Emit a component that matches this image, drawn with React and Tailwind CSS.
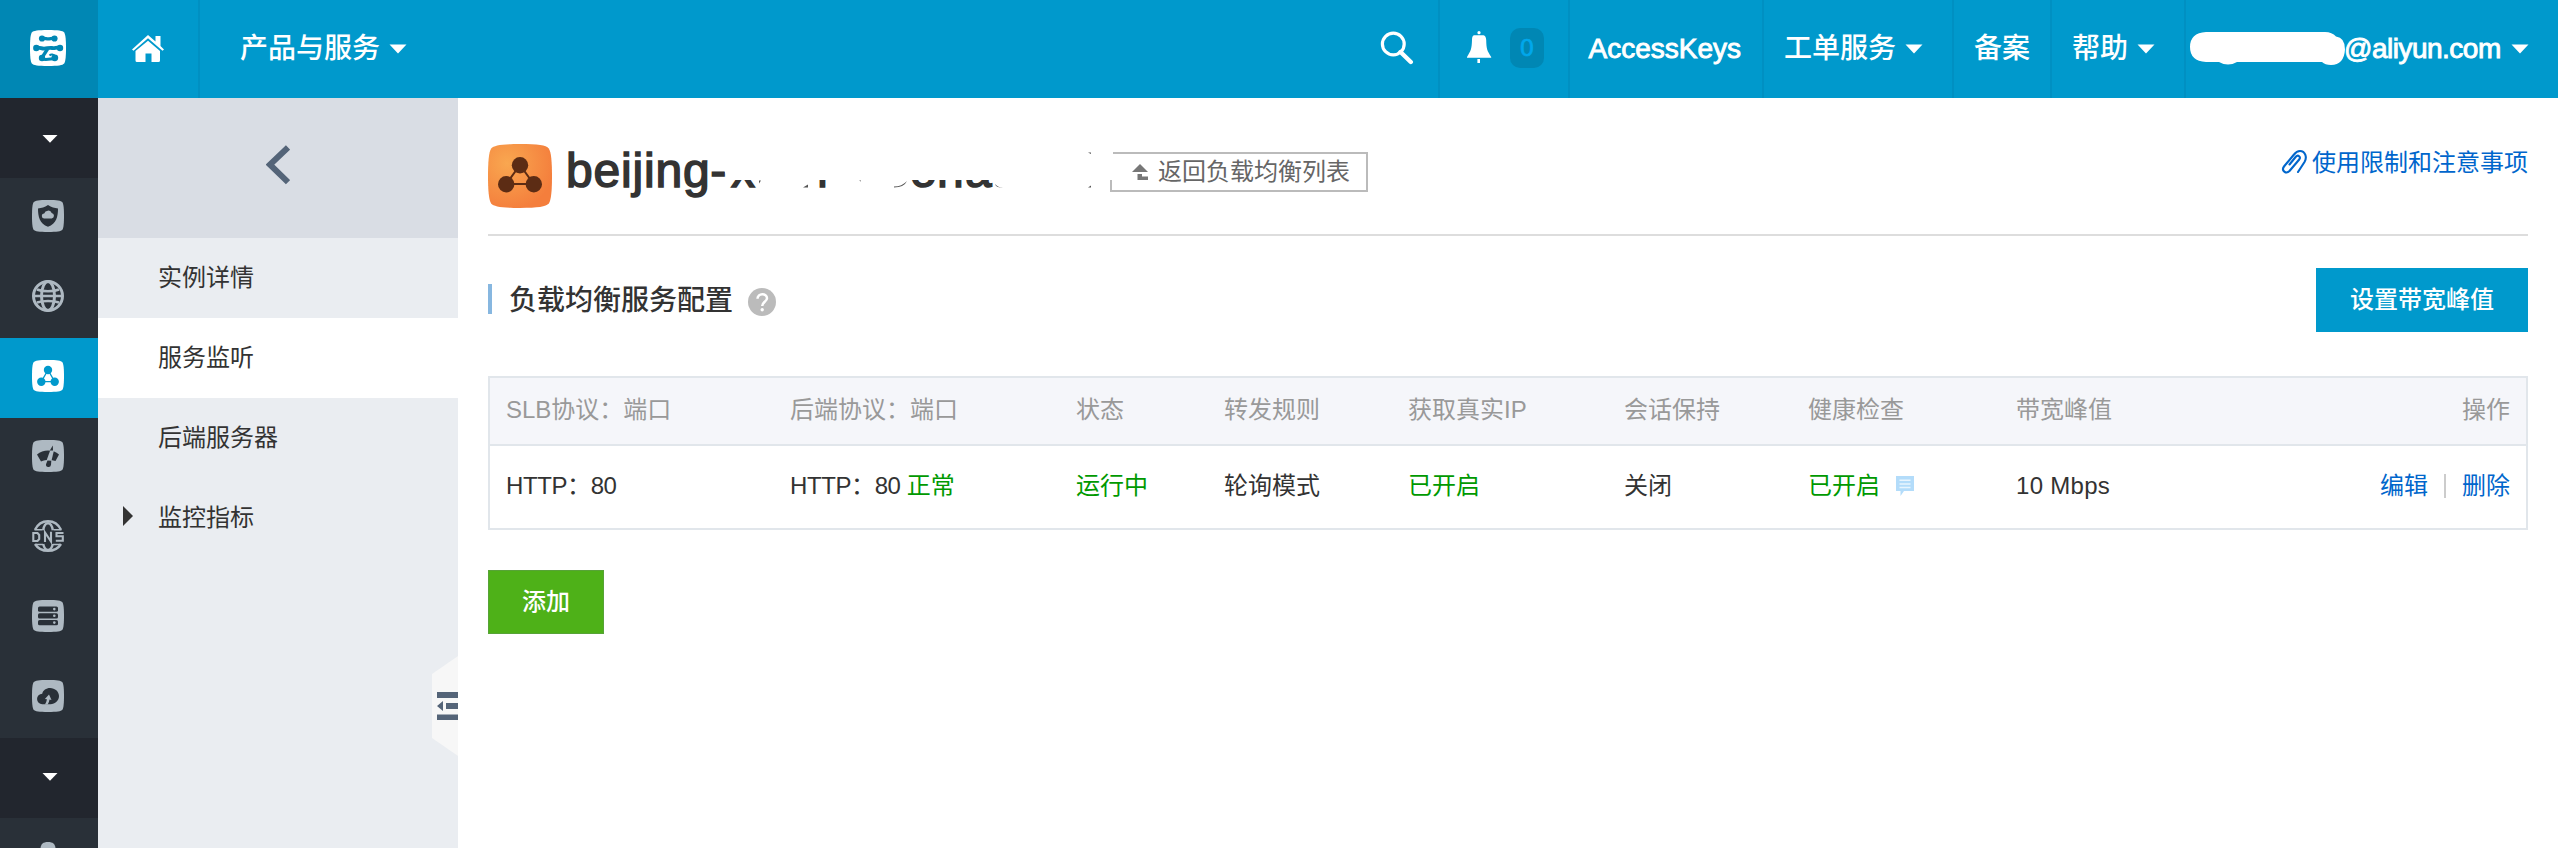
import React from "react";

const Squircle = ({ fill }) => (
  <path fill={fill} d="M16 0C25 0 29 .6 30.4 2.2 31.6 4 32 9 32 16s-.4 12-1.6 13.800C29 31.400 25 32 16 32S3 31.400 1.600 29.800C.4 28 0 23 0 16S.4 4 1.600 2.200C3 .6 7 0 16 0Z" />
);

const Caret = ({ className = "" }) => (
  <svg viewBox="0 0 18 10" className={`h-[10px] w-[18px] shrink-0 ${className}`}>
    <path d="M.5.5h17L9 9.500Z" fill="#fff" />
  </svg>
);

const LIGHT = "#aeb9c2";
const DARK = "#293038";

const LogoIcon = () => (
  <svg viewBox="0 0 36 36" className="h-9 w-9">
    <g transform="scale(1.125)"><Squircle fill="#fff" /></g>
    <g fill="#0087b4" stroke="#0087b4">
      <circle cx="12" cy="8.500" r="3.100" stroke="none" />
      <circle cx="24.500" cy="8.500" r="3.100" stroke="none" />
      <path d="M12 8.500c2.500-.6 4 .4 6.200.4s3.700-1 6.300-.4" fill="none" strokeWidth="3.400" />
      <circle cx="6.300" cy="18" r="3.200" stroke="none" />
      <circle cx="30" cy="18" r="3.200" stroke="none" />
      <path d="M6 18c3.500-1 5 .6 8 .6s5-1 8-.6 5-1 8 0" fill="none" strokeWidth="3.800" />
      <path d="M17.500 19 12.500 26.800" fill="none" strokeWidth="3.400" />
      <circle cx="12" cy="28" r="3.200" stroke="none" />
      <path d="M12 29c4 1.200 9-.2 12.500-.2" fill="none" strokeWidth="3" />
      <circle cx="24.800" cy="27.800" r="3.400" stroke="none" />
      <path d="M19.500 25.500c1.500-1.500 4-1.500 6 1" fill="none" strokeWidth="2" />
    </g>
  </svg>
);

const RailSvg = ({ children }) => <svg viewBox="0 0 32 32" className="h-8 w-8">{children}</svg>;

const ShieldIcon = () => (
  <RailSvg>
    <Squircle fill={LIGHT} />
    <path fill={DARK} d="M16 5c3.500 2.300 6.500 3 10 3.400 0 8-1.500 15-10 18.400C7.500 23.400 6 16.400 6 8.400 9.500 8 12.500 7.300 16 5Z" />
    <path fill={LIGHT} d="M12.500 18.500a2.500 2.500 0 0 1-.3-5 4 4 0 0 1 7.500-.5 2.800 2.800 0 0 1 0 5.500Z" />
  </RailSvg>
);

const GlobeIcon = () => (
  <RailSvg>
    <g fill="none" stroke={LIGHT} strokeWidth="3">
      <circle cx="16" cy="16" r="14.500" />
      <ellipse cx="16" cy="16" rx="6.500" ry="14.500" />
      <path d="M5 9.500c6 2.400 16 2.400 22 0M1.500 16h29M5 22.500c6-2 16-2 22 0" strokeWidth="2.500" />
    </g>
  </RailSvg>
);

const BalanceIcon = () => (
  <RailSvg>
    <Squircle fill="#fff" />
    <path d="M16 10 9.300 21.700h13.400Z" fill="none" stroke="#0099cc" strokeWidth="1.300" />
    <circle cx="16" cy="10" r="4.200" fill="#0099cc" />
    <circle cx="9.300" cy="21.800" r="4.200" fill="#0099cc" />
    <circle cx="22.700" cy="21.800" r="4.200" fill="#0099cc" />
  </RailSvg>
);

const GaugeIcon = () => (
  <RailSvg>
    <Squircle fill={LIGHT} />
    <path fill={DARK} d="M5 14.500c3-2.500 7-4 11-4 4.500 0 8 1.500 11 4L23.500 21c-5-1.300-9.500-1.300-14.500.500Z" />
    <path fill={LIGHT} d="M18.500 9.500 22 10l-2.800 12-5-.5Z" />
    <path fill={DARK} d="M20.800 5.500 21 10.500h-3.200ZM15.500 20.500l3.800.3-.3 4a2.500 2.500 0 0 1-5-.6Z" />
  </RailSvg>
);

const DnsIcon = () => (
  <RailSvg>
    <g fill="none" stroke={LIGHT} strokeWidth="2.400">
      <path d="M3 9.800C5.500 4.500 10.500 1.200 16 1.200S26.500 4.500 29 9.800" />
      <path d="M3 24c2.500 4 7.500 6.800 13 6.800S26.500 28 29 24" />
      <path d="M11.200 10.300c.6-3.700 2.200-7 4.800-7s4.200 3.300 4.800 7M11.200 24c.8 3.500 2.200 6 4.800 6s4-2.500 4.800-6" />
      <path d="M2.500 9.700h8M21.500 9.700h8M4 24.500h7M21 24.500h7" strokeWidth="1.500" />
      <path d="M1.300 13h4.200l1.700 2v4l-1.700 2H1.300ZM13 22v-9.500l6 9v-9.700M31.500 13h-7v3.300h6.300v4.500h-7" strokeWidth="2.100" />
    </g>
  </RailSvg>
);

const ServerIcon = () => (
  <RailSvg>
    <Squircle fill={LIGHT} />
    {[6.500, 13.200, 20].map((y) => (
      <g key={y}>
        <rect x="6" y={y} width="20" height="5.300" rx="1.600" fill={DARK} />
        <circle cx="22.300" cy={y + 2.600} r="1.300" fill={LIGHT} />
      </g>
    ))}
  </RailSvg>
);

const CloudIcon = () => (
  <RailSvg>
    <Squircle fill={LIGHT} />
    <path fill={DARK} d="M10.300 24.200a5.200 5.200 0 0 1-.1-10.400c.8-3.600 4-5.800 7.800-5.800 5 0 9 3.600 9 8.100s-3.800 8.100-8.600 8.100Z" />
    <path fill={LIGHT} d="M17 14.500 19.500 20l-2-.4c-.2 1.800-.8 3.400-1.800 5h-3c1.200-1.500 1.900-3.200 2.200-5.300l-2-.3Z" />
  </RailSvg>
);

const RAIL = [
  { id: "shield", Icon: ShieldIcon },
  { id: "globe", Icon: GlobeIcon },
  { id: "balance", Icon: BalanceIcon, active: true },
  { id: "gauge", Icon: GaugeIcon },
  { id: "dns", Icon: DnsIcon },
  { id: "server", Icon: ServerIcon },
  { id: "cloud", Icon: CloudIcon },
];

function Rail() {
  return (
    <nav className="flex w-[98px] shrink-0 flex-col overflow-hidden bg-[#293038]">
      <div className="flex h-20 shrink-0 justify-center bg-[#22262e] pl-[2px] pt-9">
        <svg viewBox="0 0 16 10" className="h-[10px] w-4"><path d="M.5 1h15L8 8.800Z" fill="#fff" /></svg>
      </div>
      {RAIL.map(({ id, Icon, active }) => (
        <div key={id} className={`h-20 shrink-0 pl-8 pt-[22px] ${active ? "bg-[#0099cc]" : ""}`}>
          <Icon />
        </div>
      ))}
      <div className="flex h-20 shrink-0 justify-center bg-[#22262e] pl-[2px] pt-[34px]">
        <svg viewBox="0 0 16 10" className="h-[10px] w-4"><path d="M.5 1h15L8 8.800Z" fill="#fff" /></svg>
      </div>
      <div className="h-[30px] shrink-0 pl-8 pt-6">
        <svg viewBox="0 0 32 6" className="h-[6px] w-8"><path d="M8.500 6C9 2 11 0 16 0s7 2 7.500 6Z" fill={LIGHT} /></svg>
      </div>
    </nav>
  );
}

function Header() {
  return (
    <header className="flex h-[98px] shrink-0 bg-[#0099cc] text-[28px] font-medium leading-[98px] text-white">
      <div className="w-[98px] bg-[#0087b4] pl-[30px] pt-[30px]"><LogoIcon /></div>
      <div className="w-[102px] border-r-2 border-[#0090c2] pl-[34px] pt-[35px]">
        <svg viewBox="0 0 32 27" className="h-[27px] w-8">
          <path fill="#fff" d="M16 5.800 28 16v9.500q0 1.500-1.500 1.500H19.500v-8.500h-6V27H5q-1.500 0-1.500-1.500V16Z" />
          <path fill="#fff" d="M16 0 23.500 6.600V1h5v10L32 14.400 30.500 15.700 16 3.300 1.500 15.700 0 14.400Z" />
        </svg>
      </div>
      <div className="flex items-center pl-10">
        <span>产品与服务</span>
        <Caret className="ml-[9px]" />
      </div>
      <div className="flex-1" />
      <div className="w-[60px] border-r-2 border-[#0090c2] pt-[31px]">
        <svg viewBox="0 0 34 34" className="h-[34px] w-[34px]">
          <circle cx="13.300" cy="13" r="10.900" fill="none" stroke="#fff" strokeWidth="3.200" />
          <path d="m20.500 21 10.300 10" stroke="#fff" strokeWidth="4.400" strokeLinecap="round" />
        </svg>
      </div>
      <div className="flex w-[130px] border-r-2 border-[#0090c2] pl-[26px]">
        <svg viewBox="0 0 26 32" className="mt-[31px] h-8 w-[26px]">
          <circle cx="13" cy="1.700" r="1.600" fill="#fff" />
          <path fill="#fff" d="M8.500 4.300h9Q20 5 20.200 9c.2 9 .8 10.500 5 17v.8H1V26c4-6.500 4.700-8 5-17C6.200 5 7 4.500 8.500 4.300Z" />
          <path d="M12.700 28v4" stroke="#fff" strokeWidth="2.600" />
        </svg>
        <span className="ml-[18px] mt-7 flex h-10 w-[34px] items-center justify-center rounded-[10px] bg-[#0087b4] text-[24px] leading-none text-[#00a8ec] [-webkit-text-stroke:0.700px_#00a8ec]">0</span>
      </div>
      <div className="w-[194px] border-r-2 border-[#0090c2] pl-[18.500px] [-webkit-text-stroke:0.900px_white]">AccessKeys</div>
      <div className="flex w-[190px] items-center border-r-2 border-[#0090c2] pl-5">
        工单服务<Caret className="ml-[9px]" />
      </div>
      <div className="w-[98px] border-r-2 border-[#0090c2] text-center">备案</div>
      <div className="flex w-[134px] items-center border-r-2 border-[#0090c2] pl-5">
        帮助<Caret className="ml-[9px]" />
      </div>
      <div className="flex w-[372px] items-center pl-[3px]">
        <svg viewBox="0 0 156 36" className="-mt-[5px] h-9 w-[156px] shrink-0">
          <path fill="#fff" d="M17 3H136q7 0 11 4.500 9 1 9 13-1 15.500-14 15.500-6 0-9-3H48q-9 5-18 0H17Q1 32 1 18T17 3Z" />
        </svg>
        <span className="-ml-px w-[158px] tracking-[-0.5px] [-webkit-text-stroke:0.900px_white]">@aliyun.com</span>
        <Caret className="ml-[9px]" />
      </div>
    </header>
  );
}

const MENU = [
  { label: "实例详情" },
  { label: "服务监听", active: true },
  { label: "后端服务器" },
  { label: "监控指标", expandable: true },
];

function Sidebar() {
  return (
    <aside className="relative w-[360px] shrink-0 bg-[#eaedf1]">
      <div className="h-[140px] bg-[#d9dde4] pl-[168px] pt-[47px]">
        <svg viewBox="0 0 24 40" className="h-10 w-6">
          <path d="M22 2.500 4 19.700l18 17.500" fill="none" stroke="#546478" strokeWidth="6" />
        </svg>
      </div>
      {MENU.map((m) => (
        <div key={m.label} className={`flex h-20 items-center text-[24px] text-[#333] ${m.active ? "bg-white" : ""}`}>
          <span className="flex w-[60px] pb-[4px] pl-[25px]">
            {m.expandable && (
              <svg viewBox="0 0 10 20" className="h-5 w-[10px]"><path d="M0 0 10 10 0 20Z" fill="#333" /></svg>
            )}
          </span>
          {m.label}
        </div>
      ))}
      <svg viewBox="0 0 26 100" className="absolute right-0 top-[558px] h-[100px] w-[26px]">
        <path d="M26 0 0 18v64l26 18Z" fill="#f7f7f7" />
        <path d="M5 36h21v6H5ZM14 47h12v6H14ZM5 58.500h21v5.500H5ZM5 50l6-5v10Z" fill="#546478" />
      </svg>
    </aside>
  );
}

function RedactedTail() {
  return (
    <div className="relative h-[48px] w-[384px] text-[48px] leading-[48px] text-[#333] [-webkit-text-stroke:1.500px_#333]">
      <span className="absolute left-[2px] top-0">x</span>
      <span className="absolute left-[88px] top-0">r</span>
      <span className="absolute left-[181px] top-0">o</span>
      <span className="absolute left-[208px] top-0">n</span>
      <span className="absolute left-[236px] top-0">a</span>
      <span className="absolute left-0 top-0 h-[33px] w-[384px] bg-white" />
      <svg viewBox="0 0 400 48" className="absolute -left-4 top-0 h-[48px] w-[400px]">
        <path d="M10 20 18 27.500H13ZM20 27.500h-7Z" fill="#fff" />
        <path d="M90 40.500 95 37.500v3ZM46 33.500h2l-2 3ZM181 39.500q8 0 13-5.500-3 6.500-13 6.500ZM282 37q3 3.500 8 3.500-7 .5-8-3.500ZM146 33.500h2v1ZM375 5.500h3v1.500ZM375 40.500l3-2v2Z" fill="#555" />
      </svg>
    </div>
  );
}

function TitleRow() {
  return (
    <div className="flex h-[138px] border-b-2 border-[#ddd]">
      <svg viewBox="0 0 32 32" className="mt-[46px] h-16 w-16 shrink-0">
        <defs>
          <radialGradient id="tile" cx="0.3" cy="0.3" r="0.75">
            <stop offset="0" stopColor="#f9a750" />
            <stop offset="1" stopColor="#f47e3c" />
          </radialGradient>
        </defs>
        <Squircle fill="url(#tile)" />
        <path d="M16 10.500 9.100 20h13.700Z" fill="none" stroke="#5c2c14" strokeWidth="1" />
        <circle cx="16" cy="10.600" r="4.100" fill="#5c2c14" />
        <circle cx="9.100" cy="20.100" r="4.100" fill="#5c2c14" />
        <circle cx="22.900" cy="20.100" r="4.100" fill="#5c2c14" />
      </svg>
      <h1 className="ml-[14px] mt-[49px] w-[163px] shrink-0 text-[48px] font-normal leading-[48px] tracking-[0.800px] text-[#333] [-webkit-text-stroke:1.500px_#333]">beijing-</h1>
      <div className="mt-[49px]"><RedactedTail /></div>
      <button className="-ml-[3px] mt-[54px] flex h-10 w-[258px] items-center border-2 border-[#bbb] bg-white pl-5 text-[24px] leading-none text-[#666]">
        <svg viewBox="0 0 16 16" className="mr-[10px] h-4 w-4"><path d="M8 0 16 8H0ZM5.500 10H10v2.500h6V16H5.500Z" fill="#777" /></svg>
        返回负载均衡列表
      </button>
      <div className="flex-1" />
      <a className="mt-[47px] flex h-[36px] items-center text-[24px] leading-none text-[#0066cc]">
        <svg viewBox="0 0 26 26" className="-mt-[4px] mr-[5px] h-[26px] w-[26px]">
          <path d="M17 24 23.500 14c3-5 .5-11-4.500-11-2.500 0-4.500 1.500-6 3.500L3 18.500c-3 4 2 8 5.500 4.500l9.700-11.500c2-2.700-1.200-5.200-3.400-2.700L8.500 16.500" fill="none" stroke="#0066cc" strokeWidth="2.100" strokeLinecap="round" />
        </svg>
        使用限制和注意事项
      </a>
    </div>
  );
}

const COLS = "grid grid-cols-[284px_286px_148px_184px_216px_184px_208px_1fr_auto] items-center px-4 text-[24px] leading-none";

function ListenerTable() {
  return (
    <div className="mt-11 border-2 border-[#e1e6eb]">
      <div className={`${COLS} h-[68px] border-b-2 border-[#e1e6eb] bg-[#f5f6fa] pb-[2px] text-[#999]`}>
        <span>SLB协议：端口</span>
        <span>后端协议：端口</span>
        <span>状态</span>
        <span>转发规则</span>
        <span>获取真实IP</span>
        <span>会话保持</span>
        <span>健康检查</span>
        <span>带宽峰值</span>
        <span>操作</span>
      </div>
      <div className={`${COLS} h-[82px] pb-[2px] text-[#333]`}>
        <span className="tracking-[-0.4px]">HTTP：80</span>
        <span><span className="tracking-[-0.4px]">HTTP：80 </span><span className="text-[#009900]">正常</span></span>
        <span className="text-[#009900]">运行中</span>
        <span>轮询模式</span>
        <span className="text-[#009900]">已开启</span>
        <span>关闭</span>
        <span className="flex items-center text-[#009900]">
          已开启
          <svg viewBox="0 0 18 20" className="ml-4 h-5 w-[18px]">
            <path d="M0 0h18v15H8l-3.500 5V15H0Z" fill="#b3dcfa" />
            <path d="M3.500 4.300h11M3.500 8h11M3.500 11.500h11" stroke="#e9f5fe" strokeWidth="1.500" />
          </svg>
        </span>
        <span className="tracking-[0.3px]">10 Mbps</span>
        <span className="flex items-center text-[#0066cc]">
          编辑
          <span className="mx-4 h-6 w-[2px] bg-[#ccc]" />
          删除
        </span>
      </div>
    </div>
  );
}

export default function App() {
  return (
    <div className="flex h-[848px] w-[2558px] flex-col overflow-hidden bg-white font-['Liberation_Sans','Noto_Sans_CJK_SC',sans-serif]">
      <Header />
      <div className="flex min-h-0 flex-1">
        <Rail />
        <Sidebar />
        <main className="flex-1 px-[30px]">
          <TitleRow />
          <div className="mt-8 flex h-16 items-center">
            <span className="-mt-[2px] h-[30px] w-1 bg-[#87b7e0]" />
            <h2 className="ml-[17px] mt-[2px] text-[28px] font-medium leading-none text-[#333]">负载均衡服务配置</h2>
            <svg viewBox="0 0 28 28" className="ml-[15px] mt-1 h-7 w-7">
              <circle cx="14" cy="14" r="14" fill="#bbb" />
              <path d="M9.500 10.800c0-6 9.500-6 9.500-.6 0 3.500-4.800 3.600-4.800 7.800" fill="none" stroke="#fff" strokeWidth="2.500" />
              <circle cx="14.200" cy="21.700" r="1.700" fill="#fff" />
            </svg>
            <button className="ml-auto h-16 w-[212px] bg-[#0099cc] text-[24px] font-medium leading-none text-white">设置带宽峰值</button>
          </div>
          <ListenerTable />
          <button className="mt-10 h-16 w-[116px] border border-[#57a337] bg-[#4eb118] text-[24px] font-medium leading-none text-white">添加</button>
        </main>
      </div>
    </div>
  );
}
